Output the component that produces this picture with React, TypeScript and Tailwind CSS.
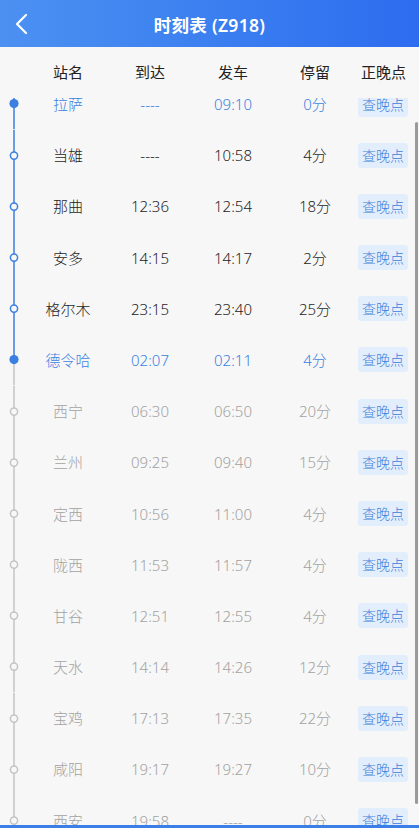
const ROWS = [
  { name: '拉萨', arr: '----', dep: '09:10', stop: '0分', state: 'cur' },
  { name: '当雄', arr: '----', dep: '10:58', stop: '4分', state: 'past' },
  { name: '那曲', arr: '12:36', dep: '12:54', stop: '18分', state: 'past' },
  { name: '安多', arr: '14:15', dep: '14:17', stop: '2分', state: 'past' },
  { name: '格尔木', arr: '23:15', dep: '23:40', stop: '25分', state: 'past' },
  { name: '德令哈', arr: '02:07', dep: '02:11', stop: '4分', state: 'cur' },
  { name: '西宁', arr: '06:30', dep: '06:50', stop: '20分', state: 'next' },
  { name: '兰州', arr: '09:25', dep: '09:40', stop: '15分', state: 'next' },
  { name: '定西', arr: '10:56', dep: '11:00', stop: '4分', state: 'next' },
  { name: '陇西', arr: '11:53', dep: '11:57', stop: '4分', state: 'next' },
  { name: '甘谷', arr: '12:51', dep: '12:55', stop: '4分', state: 'next' },
  { name: '天水', arr: '14:14', dep: '14:26', stop: '12分', state: 'next' },
  { name: '宝鸡', arr: '17:13', dep: '17:35', stop: '22分', state: 'next' },
  { name: '咸阳', arr: '19:17', dep: '19:27', stop: '10分', state: 'next' },
  { name: '西安', arr: '19:58', dep: '----', stop: '0分', state: 'next' },
];

const BLUE = '#3b7fe2';
const GRAY = '#c4c4c4';

function Dot({ state, index }: { state: string; index: number }) {
  // line above the dot is blue up to the current station (德令哈, index 5)
  const topColor = index <= 5 ? BLUE : GRAY;
  const bottomColor = index < 5 ? BLUE : GRAY;
  return (
    <svg width="28" height="51.2" viewBox="0 0 28 51.2" className="block">
      <line x1="14" y1="0" x2="14" y2="25.6" stroke={topColor} strokeWidth="1.5" />
      <line x1="14" y1="25.6" x2="14" y2="51.2" stroke={bottomColor} strokeWidth="1.5" />
      {state === 'cur' ? (
        <circle cx="14" cy="25.6" r="4.6" fill={BLUE} />
      ) : (
        <circle cx="14" cy="25.6" r="3.6" fill="#f7f7f7" stroke={state === 'past' ? BLUE : GRAY} strokeWidth="1.5" />
      )}
    </svg>
  );
}

const GRID = 'grid grid-cols-[28px_80px_84px_82px_82px_56px] items-center';

export default function App() {
  return (
    <div
      className="w-[419px] h-[828px] overflow-hidden flex flex-col bg-[#f7f7f7]"
      style={{ fontFamily: '"Noto Sans", "Noto Sans CJK SC", sans-serif' }}
    >
      <header className="h-[47px] shrink-0 relative flex items-center justify-center bg-gradient-to-r from-[#4c91f1] to-[#2d6cef]">
        <svg className="absolute left-[13px] top-[13px]" width="18" height="22" viewBox="0 0 18 22" fill="none">
          <path d="M13 2 L4 11 L13 20" stroke="white" strokeWidth="2.2" strokeLinecap="round" strokeLinejoin="round" />
        </svg>
        <h1 className="text-white text-[17.5px] font-semibold tracking-[0.3px] pt-[3px]">时刻表 (Z918)</h1>
      </header>

      <div className={`${GRID} h-[51px] shrink-0 relative z-10 bg-[#f7f7f7] text-[15px] text-[#222] text-center`}>
        <div />
        <div>站名</div>
        <div>到达</div>
        <div>发车</div>
        <div>停留</div>
        <div className="pl-[5px] text-left">正晚点</div>
      </div>

      <div className="relative flex-1 overflow-hidden">
        <div className="-mt-[19.6px]">
          {ROWS.map((r, i) => {
            const color =
              r.state === 'cur' ? 'text-[#3b7fe2]' : r.state === 'past' ? 'text-[#1e1e1e]' : 'text-[#a2a2a2]';
            return (
              <div key={r.name} className={`${GRID} h-[51.2px] text-[15px] leading-[18px] font-light text-center ${color}`}>
                <Dot state={r.state} index={i} />
                <div>{r.name}</div>
                <div>{r.arr}</div>
                <div>{r.dep}</div>
                <div>{r.stop}</div>
                <div className="flex">
                  <span className="ml-[2px] w-[50px] h-[25px] rounded-[3px] bg-[#e3eefc] text-[#3d80da] text-[14px] leading-[25px] text-center">
                    查晚点
                  </span>
                </div>
              </div>
            );
          })}
        </div>
        <div className="absolute right-[1px] top-[24px] w-[3px] h-[682px] rounded-full bg-[#9a9a9a]" />
      </div>
      <div className="h-[3px] shrink-0 bg-[#3a7ee6]" />
    </div>
  );
}
